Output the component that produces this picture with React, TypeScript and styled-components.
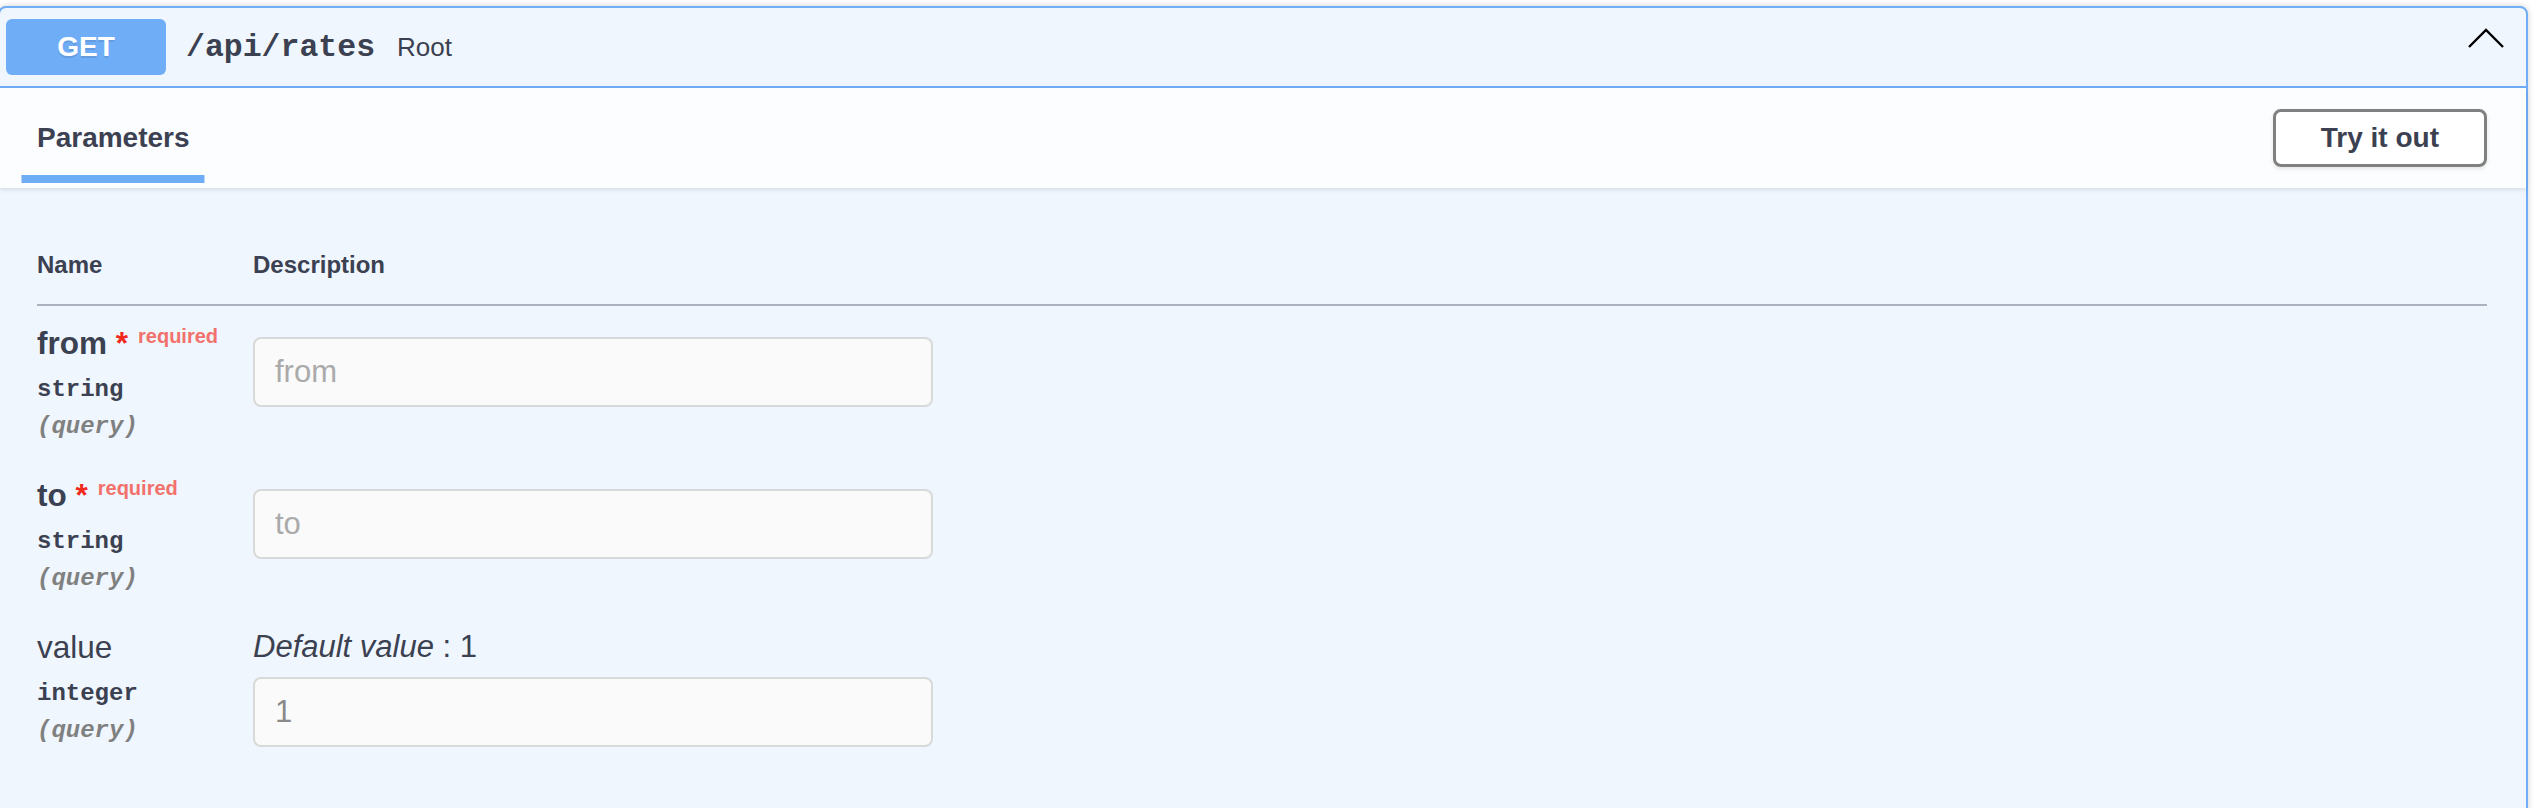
import React from 'react';
import styled, { createGlobalStyle } from 'styled-components';

const SANS = `"Liberation Sans", Arial, sans-serif`;
const MONO = `"Liberation Mono", "Courier New", monospace`;
const TEXT = '#3b4151';
const GET_BLUE = '#6fadf7';

const GlobalStyle = createGlobalStyle`
  html, body { margin: 0; padding: 0; background: #fff; }
  * { box-sizing: border-box; }
`;

const Page = styled.div`
  padding: 6px 8px 0 0;
  height: 808px;
  overflow: hidden;
`;

const OpBlock = styled.div`
  margin-left: -2px;
  border: 2px solid ${GET_BLUE};
  border-radius: 8px;
  background: #eff6fe;
  box-shadow: 0 0 6px rgba(0, 0, 0, 0.19);
  min-height: 900px;
  font-family: ${SANS};
  color: ${TEXT};
`;

const Summary = styled.div`
  display: flex;
  align-items: center;
  padding: 11px 20px 11px 6px;
  border-bottom: 2px solid ${GET_BLUE};
`;

const Method = styled.span`
  min-width: 160px;
  height: 56px;
  line-height: 56px;
  text-align: center;
  border-radius: 6px;
  background: ${GET_BLUE};
  color: #fff;
  font-size: 28px;
  font-weight: 700;
  text-shadow: 0 2px 0 rgba(0, 0, 0, 0.1);
`;

const Path = styled.span`
  padding: 0 20px;
  font-family: ${MONO};
  font-size: 31.5px;
  font-weight: 700;
`;

const Desc = styled.span`
  flex: 1;
  padding-left: 2px;
  font-size: 26px;
`;

const Chevron = styled.svg`
  width: 40px;
  height: 40px;
  margin-top: -10px;
`;

const SectionHeader = styled.div`
  display: flex;
  align-items: center;
  justify-content: space-between;
  height: 100px;
  padding: 0 39px 0 37px;
  background: rgba(255, 255, 255, 0.8);
  box-shadow: 0 2px 4px rgba(0, 0, 0, 0.1);
`;

const TabTitle = styled.h4`
  margin: 0;
  font-size: 28px;
  line-height: 32px;
  font-weight: 700;
`;

const ActiveTab = styled.span`
  position: relative;
  &::after {
    content: '';
    position: absolute;
    left: 50%;
    bottom: -30px;
    transform: translateX(-50%);
    width: 120%;
    height: 8px;
    background: ${GET_BLUE};
  }
`;

const TryButton = styled.button`
  height: 58px;
  padding: 0 45px;
  border: 3px solid #808080;
  border-radius: 8px;
  background: #fff;
  box-shadow: 0 2px 4px rgba(0, 0, 0, 0.1);
  font-family: ${SANS};
  font-size: 28px;
  font-weight: 700;
  color: ${TEXT};
`;

const TableWrap = styled.div`
  padding: 0 39px 0 37px;
`;

const Row = styled.div<{ $head?: boolean }>`
  display: grid;
  grid-template-columns: 216px 1fr;
  padding: ${p => (p.$head ? '63px 0 25px' : '19px 0 17px')};
  border-bottom: ${p => (p.$head ? '2px solid #abb3bf' : 'none')};
`;

const HeadCell = styled.div`
  font-size: 24px;
  line-height: 28px;
  font-weight: 700;
`;

const NameCol = styled.div`
  display: flex;
  flex-direction: column;
`;

const ParamName = styled.div<{ $required?: boolean }>`
  height: 36px;
  font-size: 31.5px;
  line-height: 36px;
  font-weight: ${p => (p.$required ? 700 : 400)};
  white-space: nowrap;
`;

const Star = styled.span`
  color: #f22a1c;
`;

const Required = styled.span`
  position: relative;
  top: -11px;
  padding-left: 10px;
  font-size: 20px;
  line-height: 1;
  font-weight: 700;
  color: #f2716b;
`;

const ParamType = styled.div`
  margin-top: 15px;
  font-family: ${MONO};
  font-size: 24px;
  line-height: 28px;
  font-weight: 700;
`;

const ParamIn = styled.div`
  margin-top: 9px;
  font-family: ${MONO};
  font-size: 24px;
  line-height: 28px;
  font-weight: 700;
  font-style: italic;
  color: #808080;
`;

const DescCol = styled.div`
  display: flex;
  flex-direction: column;
  align-items: flex-start;
`;

const DefaultValue = styled.div`
  height: 36px;
  font-size: 31px;
  line-height: 36px;
`;

const Input = styled.input`
  width: 680px;
  height: 70px;
  margin-top: 12px;
  padding: 0 20px;
  border: 2px solid #d9d9d9;
  border-radius: 8px;
  background: #fafafa;
  font-family: ${SANS};
  font-size: 31px;
  color: #8a8a8a;
  outline: none;
  &::placeholder { color: #aaaaaa; }
`;

type Param = {
  name: string;
  type: string;
  required: boolean;
  defaultValue?: string;
};

const PARAMS: Param[] = [
  { name: 'from', type: 'string', required: true },
  { name: 'to', type: 'string', required: true },
  { name: 'value', type: 'integer', required: false, defaultValue: '1' },
];

const ParamRow = ({ p }: { p: Param }) => (
  <Row>
    <NameCol>
      <ParamName $required={p.required}>
        {p.name}
        {p.required && <Star>&nbsp;*</Star>}
        {p.required && <Required>required</Required>}
      </ParamName>
      <ParamType>{p.type}</ParamType>
      <ParamIn>(query)</ParamIn>
    </NameCol>
    <DescCol>
      {p.defaultValue && (
        <DefaultValue>
          <i>Default value</i> : {p.defaultValue}
        </DefaultValue>
      )}
      {p.defaultValue ? (
        <Input type="text" defaultValue={p.defaultValue} />
      ) : (
        <Input type="text" placeholder={p.name} />
      )}
    </DescCol>
  </Row>
);

export default function App() {
  return (
    <Page>
      <GlobalStyle />
      <OpBlock>
        <Summary>
          <Method>GET</Method>
          <Path>/api/rates</Path>
          <Desc>Root</Desc>
          <Chevron viewBox="0 0 40 40">
            <polyline points="3,25 20,8 37,25" fill="none" stroke="#000" strokeWidth="2.4" />
          </Chevron>
        </Summary>
        <SectionHeader>
          <TabTitle>
            <ActiveTab>Parameters</ActiveTab>
          </TabTitle>
          <TryButton>Try it out</TryButton>
        </SectionHeader>
        <TableWrap>
          <Row $head>
            <HeadCell>Name</HeadCell>
            <HeadCell>Description</HeadCell>
          </Row>
          {PARAMS.map(p => (
            <ParamRow key={p.name} p={p} />
          ))}
        </TableWrap>
      </OpBlock>
    </Page>
  );
}
